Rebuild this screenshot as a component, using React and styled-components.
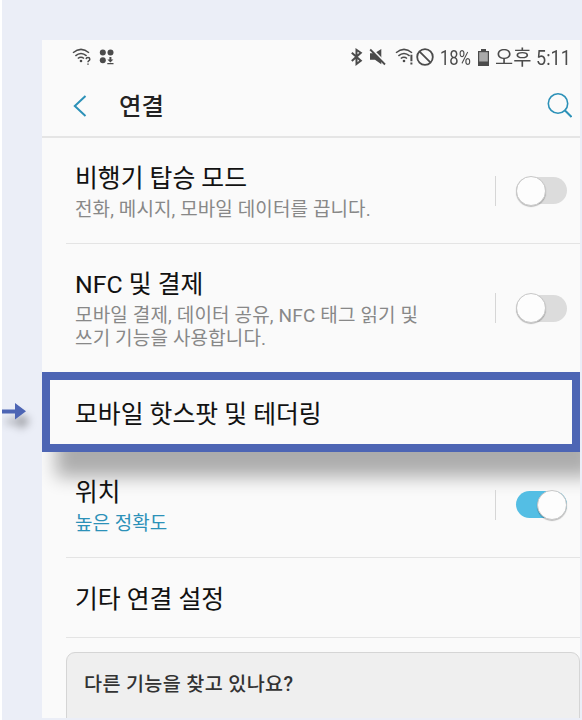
import React from "react";
import styled, { createGlobalStyle } from "styled-components";

const GlobalStyle = createGlobalStyle`
  * { box-sizing: border-box; }
  body { margin: 0; background: #fff; font-family: Roboto, "Noto Sans CJK KR", sans-serif; }
`;

const Page = styled.main`
  width: 582px;
  height: 720px;
  display: flex;
  overflow: hidden;
  background: #ebeef7;
  border-left: 2px solid #fff;
  padding: 40px 2px 2px 0;
`;

const Gutter = styled.aside`
  width: 40px;
  flex: none;
  padding-top: 362px;
`;

const Arrow = styled.svg`
  display: block;
  filter: drop-shadow(4px 10px 4px rgba(0, 0, 0, 0.36));
  overflow: visible;
`;

const Phone = styled.section`
  width: 538px;
  height: 678px;
  background: #fafafa;
  overflow: hidden;
`;

const StatusBar = styled.div`
  height: 34px;
  display: flex;
  justify-content: space-between;
  padding: 0 10px 0 30px;
  color: #4b4b4b;
`;

const StatusGroup = styled.div`
  display: flex;
  align-items: center;
`;

const StatusIcon = styled.svg`
  flex: none;
  margin-right: ${(p) => p.$gap || 0}px;
  overflow: visible;
`;

const Text = styled.span`
  display: block;
  white-space: pre;
  font-size: ${(p) => p.$size}px;
  line-height: ${(p) => p.$line}px;
  font-weight: ${(p) => p.$weight || 400};
  letter-spacing: ${(p) => p.$track || 0}px;
  color: ${(p) => p.$color || "#111"};
`;

const Title = styled(Text)`
  -webkit-text-stroke: 0.08px currentColor;
`;

const StatusText = styled(Text)`
  flex: none;
  width: ${(p) => p.$width}px;
  margin-right: ${(p) => p.$gap || 0}px;
  padding-top: ${(p) => p.$drop || 0}px;
  transform: scaleX(${(p) => p.$squeeze || 1});
  transform-origin: left;
`;

const Header = styled.header`
  height: 64px;
  display: flex;
  align-items: center;
  padding: 1px 8px 0 31px;
  border-bottom: 2px solid #e5e5e5;
`;

const HeaderTitle = styled(Text)`
  flex: 1;
  margin-left: 32px;
  padding-top: 3px;
`;

const Row = styled.div`
  height: ${(p) => p.$height}px;
  display: flex;
  align-items: center;
  margin-left: 24px;
  padding: 0 13px 0 9px;
  border-bottom: ${(p) => (p.$last ? "none" : "1px solid #e4e4e4")};
`;

const Copy = styled.div`
  flex: 1;
  padding-top: ${(p) => p.$drop || 0}px;
`;

const Toggle = styled.div`
  display: flex;
  align-items: center;
  width: 72px;
  height: 30px;
  padding-left: 20px;
  border-left: 1px solid #d6d6d6;
`;

const Track = styled.div`
  width: 51px;
  height: 27px;
  display: flex;
  align-items: center;
  justify-content: ${(p) => (p.$on ? "flex-end" : "flex-start")};
  border-radius: 14px;
  background: ${(p) => (p.$on ? "#54bee4" : "#dcdcdc")};
`;

const Knob = styled.div`
  flex: none;
  width: 30px;
  height: 30px;
  border-radius: 50%;
  background: #fdfdfd;
  border: 1px solid #c8c8c8;
  box-shadow: 0 1px 1px rgba(0, 0, 0, 0.25);
`;

const Highlight = styled.div`
  height: 80px;
  display: flex;
  align-items: center;
  padding: 5px 0 0 25px;
  border: 8px solid #4d65b4;
  box-shadow: 14px 25px 17px rgba(0, 0, 0, 0.31);
`;

const HelpCard = styled.div`
  height: 100px;
  margin: 14px 0 0 24px;
  padding: 16px 17px;
  border: 1px solid #d5d5d5;
  border-radius: 9px;
  background: #efefef;
`;

function Switch({ on }) {
  return (
    <Toggle>
      <Track $on={on}>
        <Knob />
      </Track>
    </Toggle>
  );
}

function Wifi({ mark, gap }) {
  return (
    <StatusIcon width="20" height="18" viewBox="0 0 20 18" fill="none" stroke="currentColor" strokeWidth="1.5" $gap={gap}>
      <path d="M1 4.7Q9-2 17 4.7M3.4 7.9Q9 3 14.6 7.9M5.8 10.5Q9 8 12 10.5" />
      <circle cx="9" cy="13" r="1.3" fill="currentColor" stroke="none" />
      {mark === "question" ? (
        <path d="M14.1 11.1Q14.2 9.6 16 9.6T17.8 11.2Q17.8 12.2 16.7 12.8Q16 13.2 16 14.2M16 15.4V16.8" />
      ) : (
        <path d="M16.4 6.8V13.2M16.4 14.6V16.4" strokeWidth="2" />
      )}
    </StatusIcon>
  );
}

export default function App() {
  return (
    <>
      <GlobalStyle />
      <Page>
        <Gutter>
          <Arrow width="24" height="18" viewBox="0 0 24 18" fill="#4d65b4">
            <path d="M0 7.4H13V1L24 9.3 13 17.6V11.4H0Z" />
          </Arrow>
        </Gutter>
        <Phone>
          <StatusBar>
            <StatusGroup>
              <Wifi mark="question" gap={8} />
              <StatusIcon width="14" height="16" viewBox="0 0 14 16" fill="currentColor">
                <circle cx="2.8" cy="3.5" r="3" />
                <circle cx="10.5" cy="3.5" r="3" />
                <circle cx="2.8" cy="11.3" r="3" />
                <path d="M9.4 8h2v2.5h2l-3 3-3-3h2zM7.3 14h6.2v1.2H7.3z" />
              </StatusIcon>
            </StatusGroup>
            <StatusGroup>
              <StatusIcon width="12" height="18" viewBox="0 0 12 18" fill="none" stroke="currentColor" strokeWidth="2" $gap={7}>
                <path d="M.8 4.8L9.8 12.8 5.5 16V1.8L9.8 4.8 .8 13" />
              </StatusIcon>
              <StatusIcon width="16" height="18" viewBox="0 0 16 18" $gap={9}>
                <path d="M0 5.2H4.5L11.3 1V16.3L5 11.8H0Z" fill="currentColor" />
                <path d="M1 .3L16 15.5" stroke="#fafafa" strokeWidth="2" />
                <path d="M.2 1.5L15 16.5" stroke="currentColor" strokeWidth="1.8" />
              </StatusIcon>
              <Wifi mark="alert" gap={1} />
              <StatusIcon width="18" height="18" viewBox="0 0 18 18" fill="none" stroke="currentColor" strokeWidth="1.8" $gap={6}>
                <circle cx="9" cy="9" r="7.8" />
                <path d="M3.6 3.6L14.4 14.4" />
              </StatusIcon>
              <StatusText $size={20} $line={34} $width={32} $gap={6} $squeeze={0.83} $drop={1} $color="#4b4b4b">18%</StatusText>
              <StatusIcon width="11" height="17" viewBox="0 0 11 17" $gap={6}>
                <path d="M3 0H8V2H11V17H0V2H3Z" fill="currentColor" />
                <path d="M1.2 3.2H9.8V12.5H1.2Z" fill="#aaa" />
              </StatusIcon>
              <StatusText $size={20} $line={34} $width={37} $gap={4} $squeeze={0.99} $drop={2} $color="#4b4b4b">오후</StatusText>
              <StatusText $size={21} $line={34} $width={34} $squeeze={0.86} $drop={1} $color="#4b4b4b">5:11</StatusText>
            </StatusGroup>
          </StatusBar>
          <Header>
            <svg width="14" height="22" viewBox="0 0 14 22" fill="none" stroke="#2c91b8" strokeWidth="2">
              <path d="M12.5 1L1.8 11 12.5 21" />
            </svg>
            <HeaderTitle $size={24.4} $line={34} $weight={500} $color="#222">연결</HeaderTitle>
            <svg width="25" height="25" viewBox="0 0 25 25" fill="none" stroke="#2c91b8" strokeWidth="1.6">
              <circle cx="11" cy="10.5" r="9.7" />
              <path d="M17.5 17L24.5 24" strokeWidth="2" />
            </svg>
          </Header>

          <Row $height={106}>
            <Copy $drop={6}>
              <Title $size={24.8} $line={32}>비행기 탑승 모드</Title>
              <Text $size={19} $line={29} $track={0.1} $color="#888">전화, 메시지, 모바일 데이터를 끕니다.</Text>
            </Copy>
            <Switch />
          </Row>
          <Row $height={128} $last>
            <Copy>
              <Title $size={24.8} $line={38}>NFC 및 결제</Title>
              <Text $size={19} $line={23} $track={0.15} $color="#888">{"모바일 결제, 데이터 공유, NFC 태그 읽기 및\n쓰기 기능을 사용합니다."}</Text>
            </Copy>
            <Switch />
          </Row>
          <Highlight>
            <Title $size={24.8} $line={36}>모바일 핫스팟 및 테더링</Title>
          </Highlight>
          <Row $height={106}>
            <Copy $drop={6}>
              <Title $size={24.6} $line={32}>위치</Title>
              <Text $size={19} $line={29} $color="#2c91b8">높은 정확도</Text>
            </Copy>
            <Switch on />
          </Row>
          <Row $height={80}>
            <Copy $drop={4}>
              <Title $size={24.8} $line={36}>기타 연결 설정</Title>
            </Copy>
          </Row>
          <HelpCard>
            <Text $size={19.6} $line={31} $weight={500} $track={0.35} $color="#333">다른 기능을 찾고 있나요?</Text>
          </HelpCard>
        </Phone>
      </Page>
    </>
  );
}
